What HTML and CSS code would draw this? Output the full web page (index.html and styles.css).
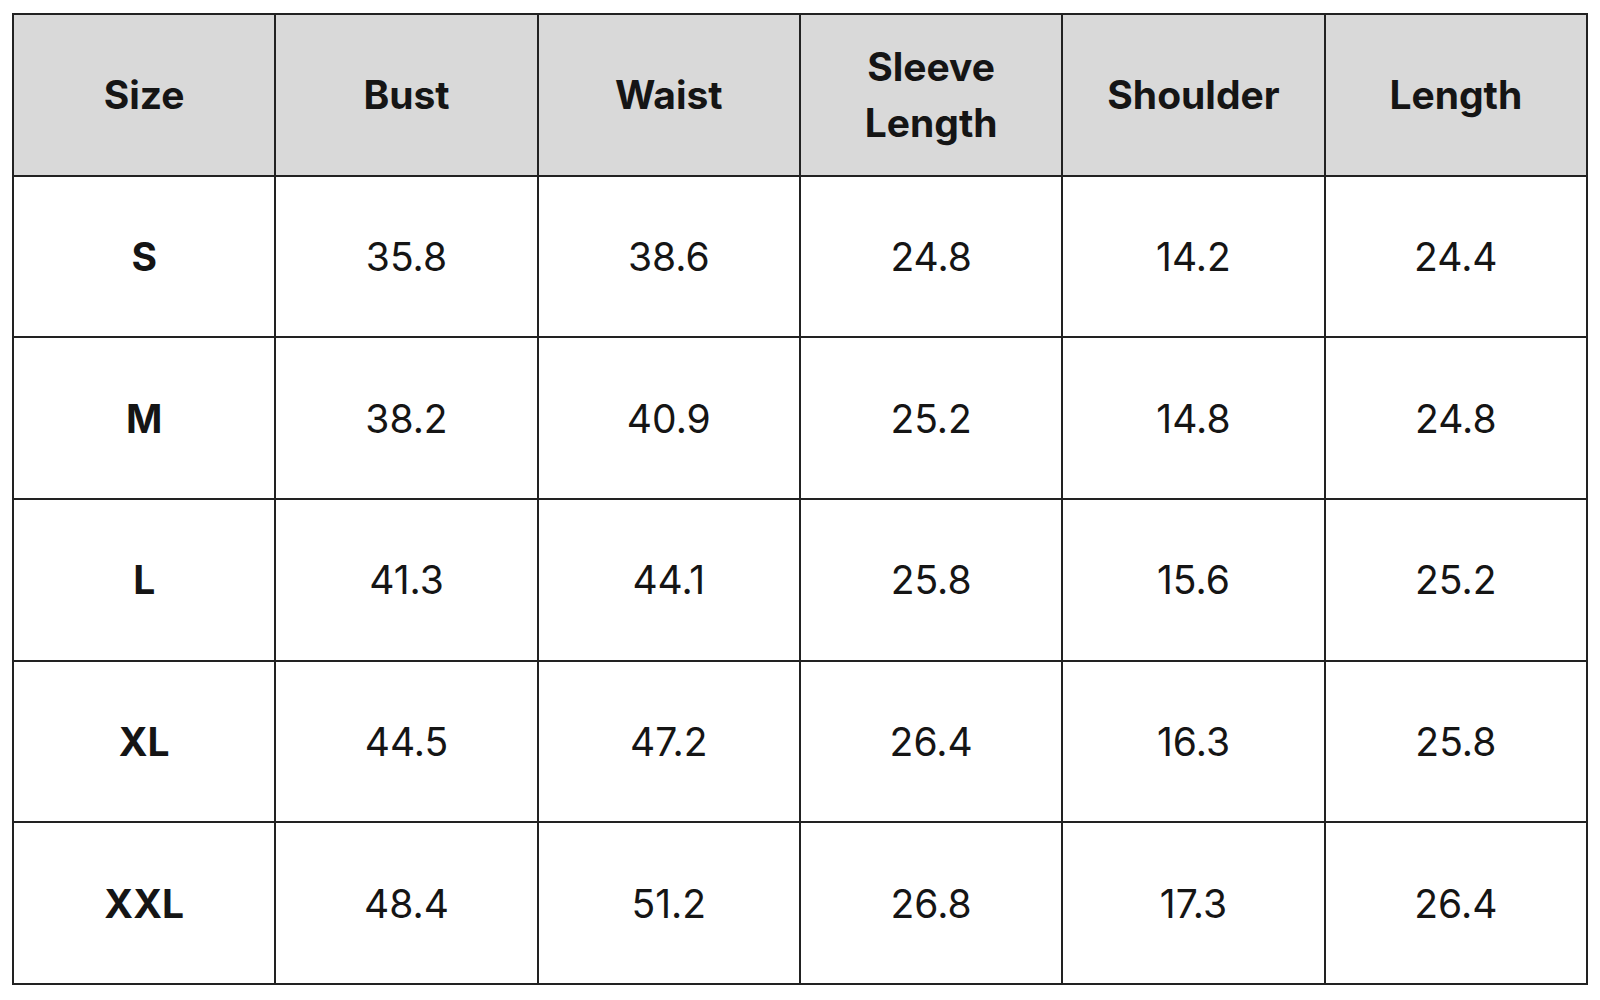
FILE: index.html
```html
<!DOCTYPE html>
<html>
<head>
<meta charset="utf-8">
<link rel="stylesheet" href="styles.css">
</head>
<body>
<table class="size-chart">
  <thead>
    <tr>
      <th>Size</th>
      <th>Bust</th>
      <th>Waist</th>
      <th>Sleeve<br>Length</th>
      <th>Shoulder</th>
      <th>Length</th>
    </tr>
  </thead>
  <tbody>
    <tr><td class="size">S</td><td>35.8</td><td>38.6</td><td>24.8</td><td>14.2</td><td>24.4</td></tr>
    <tr><td class="size">M</td><td>38.2</td><td>40.9</td><td>25.2</td><td>14.8</td><td>24.8</td></tr>
    <tr><td class="size">L</td><td>41.3</td><td>44.1</td><td>25.8</td><td>15.6</td><td>25.2</td></tr>
    <tr><td class="size">XL</td><td>44.5</td><td>47.2</td><td>26.4</td><td>16.3</td><td>25.8</td></tr>
    <tr><td class="size">XXL</td><td>48.4</td><td>51.2</td><td>26.8</td><td>17.3</td><td>26.4</td></tr>
  </tbody>
</table>
</body>
</html>
```

FILE: styles.css
```css
html, body {
  margin: 0;
  padding: 0;
  background: #ffffff;
}

body {
  padding: 13px 0 0 12px;
  font-family: "Inter", "Open Sans", sans-serif;
  color: #151515;
}

.size-chart {
  border-collapse: collapse;
  table-layout: fixed;
  width: 1576px;
}

.size-chart th,
.size-chart td {
  border: 2px solid #222222;
  text-align: center;
  vertical-align: middle;
  height: 159.7px;
  padding: 0;
}

.size-chart th {
  background: #d9d9d9;
  font-weight: 700;
  font-size: 39px;
  line-height: 56px;
}

.size-chart td {
  font-weight: 400;
  font-size: 39px;
}

.size-chart td.size {
  font-weight: 700;
}
```
